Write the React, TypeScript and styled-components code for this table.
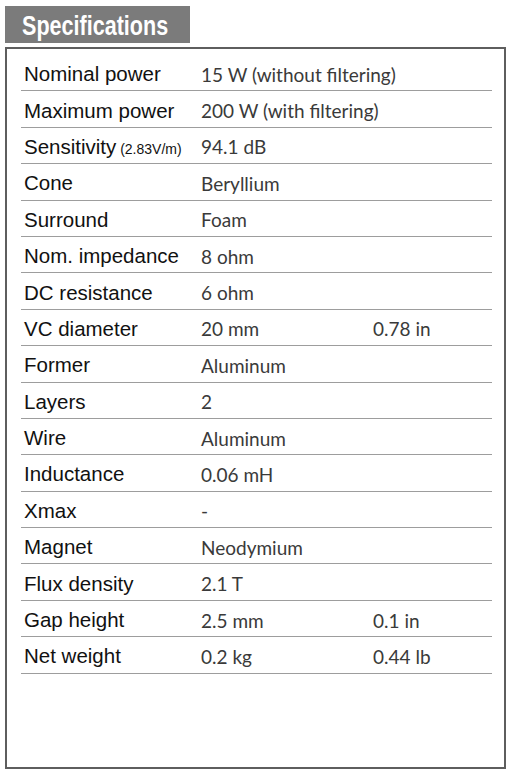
import * as React from 'react';
import styled, { createGlobalStyle } from 'styled-components';

type Spec = {
  label: string;
  note?: string;
  value: string;
  imperial?: string;
};

const specs: Spec[] = [
  { label: 'Nominal power', value: '15 W (without filtering)' },
  { label: 'Maximum power', value: '200 W (with filtering)' },
  { label: 'Sensitivity', note: '(2.83V/m)', value: '94.1 dB' },
  { label: 'Cone', value: 'Beryllium' },
  { label: 'Surround', value: 'Foam' },
  { label: 'Nom. impedance', value: '8 ohm' },
  { label: 'DC resistance', value: '6 ohm' },
  { label: 'VC diameter', value: '20 mm', imperial: '0.78 in' },
  { label: 'Former', value: 'Aluminum' },
  { label: 'Layers', value: '2' },
  { label: 'Wire', value: 'Aluminum' },
  { label: 'Inductance', value: '0.06 mH' },
  { label: 'Xmax', value: '-' },
  { label: 'Magnet', value: 'Neodymium' },
  { label: 'Flux density', value: '2.1 T' },
  { label: 'Gap height', value: '2.5 mm', imperial: '0.1 in' },
  { label: 'Net weight', value: '0.2 kg', imperial: '0.44 lb' },
];

const GlobalStyle = createGlobalStyle`
  html, body {
    margin: 0;
    padding: 0;
    background: #ffffff;
  }
`;

const Page = styled.div`
  box-sizing: border-box;
  width: 510px;
  height: 773px;
  padding: 6px 4px 4px 5px;
  display: flex;
  flex-direction: column;
  gap: 4px;
`;

const Heading = styled.h2`
  box-sizing: border-box;
  margin: 0;
  width: 185px;
  height: 37px;
  padding-left: 17px;
  background-color: #7b7b7b;
  color: #ffffff;
  font-family: 'Liberation Sans', Arial, sans-serif;
  font-weight: bold;
  font-size: 28px;
  line-height: 40px;
  white-space: nowrap;
`;

// the original heading face is a condensed sans; squeeze a regular one
const HeadingText = styled.span`
  display: inline-block;
  transform: scaleX(0.77);
  transform-origin: left center;
`;

const Panel = styled.div`
  box-sizing: border-box;
  flex: 1;
  border: 2px solid #5e5e5e;
  padding: 6px 12px 0 14px;
`;

const Row = styled.div`
  display: grid;
  grid-template-columns: 180px 172px 1fr;
  align-items: center;
  height: 36.4px;
  padding-top: 3px;
  box-sizing: border-box;
  border-bottom: 1px solid #9d9d9d;
`;

const Label = styled.span`
  padding-left: 3px;
  font-family: 'Liberation Sans', Arial, sans-serif;
  font-size: 20.5px;
  color: #111111;
  white-space: nowrap;
`;

const Note = styled.span`
  font-size: 14px;
`;

const Value = styled.span`
  font-family: 'Lato', 'Open Sans', sans-serif;
  font-size: 19px;
  color: #3a3a3a;
  white-space: nowrap;
`;

const App = () => {
  return (
    <Page>
      <GlobalStyle />
      <Heading>
        <HeadingText>Specifications</HeadingText>
      </Heading>
      <Panel>
        {specs.map(spec => (
          <Row key={spec.label}>
            <Label>
              {spec.label}
              {spec.note && <Note> {spec.note}</Note>}
            </Label>
            <Value>{spec.value}</Value>
            <Value>{spec.imperial}</Value>
          </Row>
        ))}
      </Panel>
    </Page>
  );
};

export default App;
